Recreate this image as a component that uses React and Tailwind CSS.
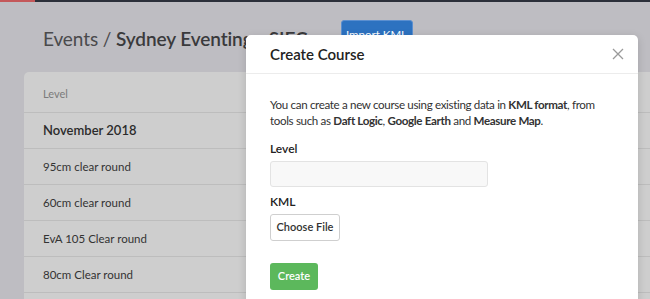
import React from 'react';

const rows = ['95cm clear round', '60cm clear round', 'EvA 105 Clear round', '80cm Clear round', ''];

const CloseIcon = () => (
  <svg width="12" height="12" viewBox="0 0 12 12" fill="none" stroke="#9a9a9a" strokeWidth="1.3">
    <path d="M1 1L11 11M11 1L1 11" />
  </svg>
);

const App = () => {
  return (
    <div
      className="relative w-[650px] h-[299px] overflow-hidden bg-[#bebdc2]"
      style={{ fontFamily: 'Lato, "Open Sans", sans-serif' }}
    >
      {/* top bar */}
      <div className="flex h-[2px] bg-[#2c303a]">
        <div className="w-[35px] bg-[#c4585a]" />
      </div>

      {/* page header */}
      <div className="flex items-start h-[70px] pl-[43px] pt-[18px]">
        <h1 className="mt-[6px] text-[19px] leading-[26px] text-[#4a4a4c] tracking-[-0.1px]">
          Events / <span className="font-semibold text-[#3a3a3c]">Sydney Eventing - SIEC</span>
        </h1>
        <div className="ml-[33px] h-[30px] w-[72px] flex items-center justify-center rounded-[3px] border border-[#5b8fd0] bg-[#2d72c0] text-white text-[11.5px]">
          Import KML
        </div>
      </div>

      {/* table card */}
      <div className="ml-[24px] rounded-tl-[5px] bg-[#cecece]">
        <div className="h-[41px] pl-[19px] flex items-center pt-[5px] border-b border-[#bdbdbd] text-[11px] text-[#7b7b7b]">
          Level
        </div>
        <div className="h-[36px] pl-[19px] flex items-center border-b border-[#bdbdbd] text-[13px] font-semibold text-[#2b2b2b]">
          November 2018
        </div>
        {rows.map((r, i) => (
          <div
            key={i}
            className="h-[36px] pl-[19px] flex items-center border-b border-[#bdbdbd] text-[11.5px] text-[#333]"
          >
            {r}
          </div>
        ))}
      </div>

      {/* modal */}
      <div className="absolute left-[246px] top-[35px] w-[392px] h-[280px] bg-white rounded-t-[5px] shadow-[0_2px_8px_rgba(0,0,0,0.15)]">
        <div className="h-[39px] flex items-center justify-between pl-[24px] pr-[14px] border-b border-[#ececec]">
          <h2 className="text-[15px] font-semibold text-[#222]">Create Course</h2>
          <CloseIcon />
        </div>
        <div className="px-[24px] pt-[23px]">
          <p className="text-[11.6px] leading-[16px] tracking-[-0.35px] text-[#333]">
            You can create a new course using existing data in <b>KML format</b>, from tools such as{' '}
            <b>Daft Logic</b>, <b>Google Earth</b> and <b>Measure Map</b>.
          </p>
          <label className="block mt-[12px] text-[12px] leading-[16px] font-semibold text-[#222]">Level</label>
          <div className="mt-[4px] w-[218px] h-[26px] rounded-[3px] border border-[#e3e3e3] bg-[#f8f8f8]" />
          <label className="block mt-[7px] text-[12px] leading-[16px] font-semibold text-[#222]">KML</label>
          <div className="mt-[4px] w-[70px] h-[27px] flex items-center justify-center rounded-[3px] border border-[#cfcfcf] bg-white text-[11px] font-semibold text-[#333]">
            Choose File
          </div>
          <div className="mt-[22px] w-[48px] h-[27px] flex items-center justify-center rounded-[3px] bg-[#5cb85c] text-white text-[11px] font-semibold">
            Create
          </div>
        </div>
      </div>
    </div>
  );
};

export default App;
